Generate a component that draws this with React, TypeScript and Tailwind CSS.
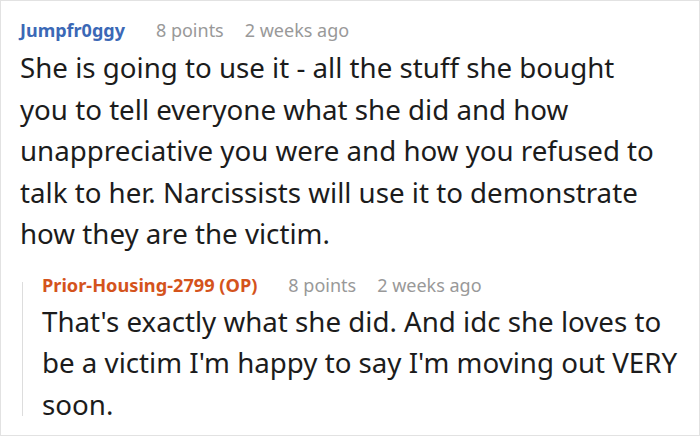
import React from 'react'

type MetaProps = { name: string; nameClass: string; points: string; time: string }

function Meta({ name, nameClass, points, time }: MetaProps) {
  return (
    <div className="flex items-center h-6 text-[18px] leading-6">
      <span className={nameClass}>{name}</span>
      <span className="ml-[31px] text-[#999999]">{points}</span>
      <span className="ml-[21px] text-[#999999]">{time}</span>
    </div>
  )
}

export default function App() {
  return (
    <div className="w-[700px] h-[436px] border border-[#e2e2e2] bg-white overflow-hidden font-['Noto_Sans','Open_Sans',sans-serif]">
      {/* top-level comment */}
      <div className="pl-[19px] pt-[17px]">
        <Meta name="Jumpfr0ggy" nameClass="font-bold text-[#3b68b6]" points="8 points" time="2 weeks ago" />
        <p className="mt-[5px] w-[645px] text-[27.7px] leading-[41.5px] text-[#1c1c1c]">
          She is going to use it - all the stuff she bought you to tell everyone what she did and how
          unappreciative you were and how you refused to talk to her. Narcissists will use it to
          demonstrate how they are the victim.
        </p>
      </div>

      {/* reply */}
      <div className="flex ml-[21px] mt-[18px]">
        <div className="w-px bg-[#dddddd] my-[9px]" />
        <div className="pl-[19px] w-[660px]">
          <Meta name="Prior-Housing-2799 (OP)" nameClass="font-bold text-[18.2px] text-[#d4531c]" points="8 points" time="2 weeks ago" />
          <p className="mt-[4px] text-[27.7px] leading-[41.5px] text-[#1c1c1c]">
            That's exactly what she did. And idc she loves to be a victim I'm happy to say I'm moving
            out VERY soon.
          </p>
        </div>
      </div>
    </div>
  )
}
